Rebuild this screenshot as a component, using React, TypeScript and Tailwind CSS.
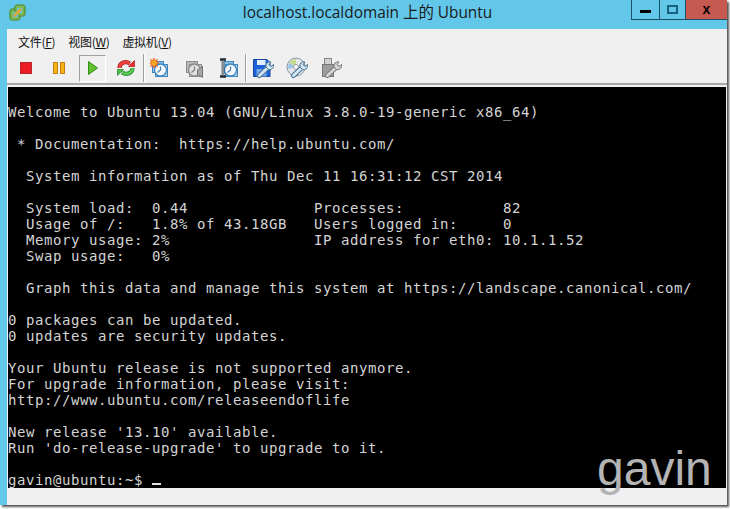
const terminalLines = [
  '',
  'Welcome to Ubuntu 13.04 (GNU/Linux 3.8.0-19-generic x86_64)',
  '',
  ' * Documentation:  https://help.ubuntu.com/',
  '',
  '  System information as of Thu Dec 11 16:31:12 CST 2014',
  '',
  '  System load:  0.44              Processes:           82',
  '  Usage of /:   1.8% of 43.18GB   Users logged in:     0',
  '  Memory usage: 2%                IP address for eth0: 10.1.1.52',
  '  Swap usage:   0%',
  '',
  '  Graph this data and manage this system at https://landscape.canonical.com/',
  '',
  '0 packages can be updated.',
  '0 updates are security updates.',
  '',
  'Your Ubuntu release is not supported anymore.',
  'For upgrade information, please visit:',
  'http://www.ubuntu.com/releaseendoflife',
  '',
  "New release '13.10' available.",
  "Run 'do-release-upgrade' to upgrade to it.",
  '',
  'gavin@ubuntu:~$ ',
];

function Clock({ gray }: { gray?: boolean }) {
  const edge = gray ? '#8c8c8c' : '#3f86bd';
  return (
    <>
      <rect x="3.5" y="3.5" width="11" height="11" fill={gray ? '#b8b8b8' : '#8cc0e6'} stroke={edge} />
      <rect x="6.5" y="6.5" width="12" height="12" fill={gray ? '#c8c8c8' : '#a9d2ee'} stroke={edge} />
      <circle cx="11.5" cy="12" r="6" fill={gray ? '#e0e0e0' : '#f2f8fc'} stroke={edge} strokeWidth="1.3" />
      <path d="M11.5 8.5V12l-3 2.5" fill="none" stroke={gray ? '#808080' : '#4a7fa8'} strokeWidth="1.2" />
    </>
  );
}

function Wrench({ gray }: { gray?: boolean }) {
  const edge = gray ? '#7a7a7a' : '#47708f';
  const fill = gray ? '#d4d4d4' : '#d2e6f4';
  return (
    <>
      <path d="M7.5 18.5 L16.5 10" stroke={edge} strokeWidth="5" strokeLinecap="round" />
      <path d="M7.5 18.5 L16.5 10" stroke={fill} strokeWidth="3" strokeLinecap="round" />
      <path d="M14 10a4 4 0 0 1 5-5l-2 2.5 2 2 2.5-2a4 4 0 0 1-5 5z" fill={fill} stroke={edge} />
    </>
  );
}

function ToolIcon({ name }: { name: string }) {
  return (
    <svg width="22" height="22" viewBox="0 0 22 22">
      {name === 'stop' && <rect x="5.5" y="5.5" width="11" height="11" fill="#ee1c25" stroke="#b02a2a" />}
      {name === 'pause' && (
        <g fill="#f9b316" stroke="#c27f14">
          <rect x="5.5" y="5.5" width="4" height="11" />
          <rect x="12.5" y="5.5" width="4" height="11" />
        </g>
      )}
      {name === 'play' && <path d="M6.5 4.5 L15.5 11 L6.5 17.5 Z" fill="#63bf2d" stroke="#2f8f1b" />}
      {name === 'reset' && (
        <g>
          <path d="M4.5 11 C4.5 6 10 3.5 15 6.5" fill="none" stroke="#b01e22" strokeWidth="4.2" />
          <path d="M4.5 11 C4.5 6 10 3.5 15 6.5" fill="none" stroke="#f0403c" strokeWidth="2.6" />
          <path d="M13.5 9.5 H19.5 V3.5 Z" fill="#e8302e" stroke="#b01e22" strokeWidth="0.8" />
          <path d="M17.5 11 C17.5 16 12 18.5 7 15.5" fill="none" stroke="#23882e" strokeWidth="4.2" />
          <path d="M17.5 11 C17.5 16 12 18.5 7 15.5" fill="none" stroke="#58c74f" strokeWidth="2.6" />
          <path d="M8.5 12.5 H2.5 V18.5 Z" fill="#4cbd47" stroke="#23882e" strokeWidth="0.8" />
        </g>
      )}
      {name === 'snapshot' && (
        <g transform="translate(-1 1)">
          <Clock />
          <path
            d="M5 0 L6 2.5 L8.5 1.5 L7.5 4 L10 5 L7.5 6 L8.5 8.5 L6 7.5 L5 10 L4 7.5 L1.5 8.5 L2.5 6 L0 5 L2.5 4 L1.5 1.5 L4 2.5 Z"
            fill="#f6a623"
            stroke="#e8541c"
            strokeWidth="0.7"
          />
        </g>
      )}
      {name === 'revert' && (
        <g transform="translate(-1 1)">
          <Clock gray />
          <path d="M14.5 12 L19.5 8.5 V19.5 L14.5 16 Z" fill="#a6a6a6" stroke="#707070" />
        </g>
      )}
      {name === 'manage' && (
        <g transform="translate(1 1)">
          <Clock />
          <path d="M1 1.5 H7 M1 18.5 H7 M4 1.5 V18.5" fill="none" stroke="#1e2a33" strokeWidth="2.6" />
          <path d="M4 2.5 V17.5" stroke="#f0f0f0" strokeWidth="1" />
        </g>
      )}
      {name === 'disk' && (
        <g>
          <path d="M1.5 2.5 H15 L18 5.5 V19.5 H1.5 Z" fill="#1b62d8" stroke="#17479c" />
          <rect x="5" y="3" width="8.5" height="5" fill="#e6eefb" />
          <rect x="4.5" y="12" width="10" height="7.5" fill="#77a6ea" />
          <Wrench />
        </g>
      )}
      {name === 'cd' && (
        <g>
          <circle cx="10" cy="10" r="9" fill="#e4e8ec" stroke="#8795a2" />
          <path d="M10 10 L3 6 A8 8 0 0 1 10 2 Z" fill="#c9dd92" />
          <path d="M10 10 L3 6 A8 8 0 0 0 2.5 12 Z" fill="#9cc6e8" />
          <circle cx="10" cy="10" r="2.5" fill="#ffffff" stroke="#96a3ad" />
          <Wrench />
        </g>
      )}
      {name === 'usb' && (
        <g>
          <rect x="4.5" y="1.5" width="7" height="6" fill="#d2d2d2" stroke="#858585" />
          <rect x="2.5" y="7.5" width="11" height="12" fill="#9d9d9d" stroke="#767676" />
          <Wrench gray />
        </g>
      )}
    </svg>
  );
}

function ToolButton({ name, wide, active }: { name: string; wide?: boolean; active?: boolean }) {
  return (
    <div className={`flex h-[30px] shrink-0 items-center justify-center ${wide ? 'w-[34px]' : 'w-[33.5px]'}`}>
      <div
        className={`flex h-[27px] w-[27px] items-center justify-center ${
          active ? 'border border-b-white border-l-[#a0a0a0] border-r-white border-t-[#a0a0a0]' : ''
        }`}
      >
        <ToolIcon name={name} />
      </div>
    </div>
  );
}

export default function App() {
  return (
    <div className="relative h-[509px] w-[730px] overflow-hidden bg-white">
      <div className="flex h-[505px] w-[727px] flex-col bg-[#63c7ea] pl-[7px] shadow-[2px_2px_2px_#555]">
        {/* title bar */}
        <div className="relative flex h-[29px] shrink-0 items-center justify-center pb-[3px] pl-[1px]">
          <svg className="absolute left-[2px] top-[4px]" width="17" height="17" viewBox="0 0 17 17">
            <rect x="1" y="5" width="10" height="11" rx="3" fill="#7fb954" stroke="#5a9a48" strokeWidth="1.6" />
            <rect x="6" y="1" width="10" height="11" rx="3" fill="#7fb954" stroke="#5a9a48" strokeWidth="1.6" />
            <rect x="4" y="8" width="5" height="5" fill="#63c7ea" />
            <rect x="8" y="4" width="5" height="5" fill="#63c7ea" />
            <path d="M5 12 L12 5" stroke="#d8a93a" strokeWidth="3" />
          </svg>
          <span className="font-['Open_Sans','Noto_Sans_CJK_SC',sans-serif] text-[15.4px] text-[#1a1a1a]">
            localhost.localdomain 上的 Ubuntu
          </span>
          <div className="absolute right-0 top-0 flex h-[20px] items-stretch">
            <div className="flex w-[28px] items-center justify-center border-b border-l border-[#1c4f68]">
              <div className="mt-[3px] h-[3px] w-[11px] bg-black" />
            </div>
            <div className="flex w-[26px] items-center justify-center border-b border-l border-[#1c4f68]">
              <div className="h-[9px] w-[11px] border-2 border-[#17617f]" />
            </div>
            <div className="flex w-[42px] items-center justify-center border-b border-l border-[#1c4f68] bg-[#c75a50] pb-[1px] font-['Liberation_Sans',sans-serif] text-[14px] font-bold text-black">
              x
            </div>
          </div>
        </div>
        {/* client area */}
        <div className="flex min-h-0 flex-1 flex-col bg-[#f0f0f0]">
          <div className="flex h-[24px] shrink-0 items-center gap-[13px] pl-[11px] pt-[2px] font-['Noto_Sans_CJK_SC',sans-serif] text-[12px] tracking-[-0.3px] text-[#111]">
            <span>
              文件(<u>F</u>)
            </span>
            <span>
              视图(<u>W</u>)
            </span>
            <span>
              虚拟机(<u>V</u>)
            </span>
          </div>
          <div className="flex h-[30px] shrink-0 items-center pl-[2px]">
            <ToolButton name="stop" />
            <ToolButton name="pause" />
            <ToolButton name="play" active />
            <ToolButton name="reset" />
            <div className="-mr-[1px] h-[28px] w-[2px] shrink-0 border-l border-r border-l-[#a0a0a0] border-r-white" />
            <ToolButton name="snapshot" wide />
            <ToolButton name="revert" wide />
            <ToolButton name="manage" wide />
            <div className="-mx-[1px] h-[28px] w-[2px] shrink-0 border-l border-r border-l-[#a0a0a0] border-r-white" />
            <ToolButton name="disk" wide />
            <ToolButton name="cd" wide />
            <ToolButton name="usb" wide />
          </div>
          <div className="mb-[2px] h-[2px] shrink-0 bg-[#a8a8a8]" />
          <div className="ml-[1px] mr-[1px] h-[401px] shrink-0 overflow-hidden bg-black pt-[1px] font-['DejaVu_Sans_Mono',monospace] text-[14px] leading-[16px] text-[#d4d4d4]">
            {terminalLines.map((line, i) => (
              <div key={i} className="h-[16px] whitespace-pre tracking-[0.57px]">
                {line}
                {i === terminalLines.length - 1 && <span className="inline-block h-[2px] w-[9px] bg-[#e0e0e0]" />}
              </div>
            ))}
          </div>
        </div>
      </div>
      {/* watermark */}
      <span className="absolute left-[597px] top-[441px] font-['Liberation_Sans',sans-serif] text-[48px] leading-[56px] text-[#b4b4b4]">
        gavin
      </span>
    </div>
  );
}
